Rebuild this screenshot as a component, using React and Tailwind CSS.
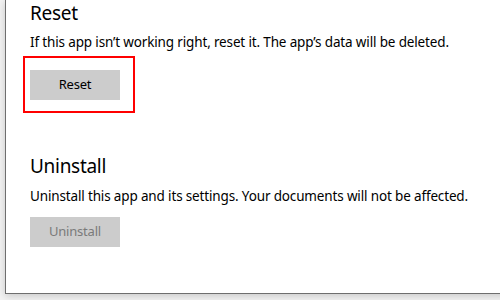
export default function App() {
  return (
    <div className="w-[500px] h-[300px] overflow-hidden bg-[#f3f3f3] relative" style={{ fontFamily: '"Noto Sans", "Open Sans", sans-serif' }}>
      <div className="ml-[5px] w-[520px] h-[294px] bg-white border-l border-b border-[#6e6e6e] shadow-[0_2px_8px_rgba(0,0,0,0.18)] pl-[24px] text-black">
        <h2 className="text-[19px] leading-[24px] tracking-[-0.3px] pt-[1px]">Reset</h2>
        <p className="mt-[7px] text-[13.5px] leading-[20px] tracking-[-0.15px]">If this app isn’t working right, reset it. The app’s data will be deleted.</p>
        <div className="relative mt-[18px] w-[90px]">
          <div className="absolute left-[-7px] top-[-14px] w-[112px] h-[57px] border-2 border-[#ff0000]"></div>
          <button className="w-[90px] h-[30px] bg-[#cccccc] text-[13px] tracking-[-0.2px] text-black">Reset</button>
        </div>
        <h2 className="mt-[54px] text-[19px] leading-[24px] tracking-[-0.3px]">Uninstall</h2>
        <p className="mt-[8px] text-[13.5px] leading-[20px] tracking-[-0.15px]">Uninstall this app and its settings. Your documents will not be affected.</p>
        <button className="mt-[11px] w-[90px] h-[30px] bg-[#cccccc] text-[13px] tracking-[-0.2px] text-[#7a7a7a]">Uninstall</button>
      </div>
    </div>
  );
}
